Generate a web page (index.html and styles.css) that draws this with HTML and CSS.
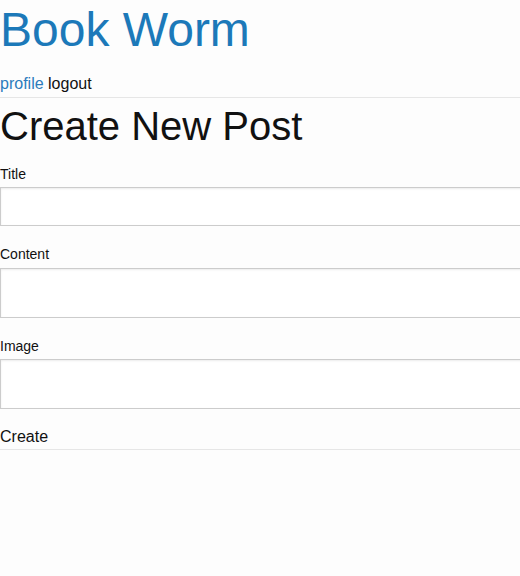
FILE: index.html
```html
<!DOCTYPE html>
<html lang="en">
<head>
<meta charset="utf-8">
<title>Book Worm</title>
<link rel="stylesheet" href="styles.css">
</head>
<body>
<header class="site-header">
  <h1 class="brand">Book Worm</h1>
  <nav class="nav">
    <a class="nav-link" href="#">profile</a>
    <a class="nav-link nav-logout" href="#">logout</a>
  </nav>
</header>
<main class="main">
  <h2 class="page-title">Create New Post</h2>
  <form class="post-form">
    <div class="field">
      <label class="field-label" for="title">Title</label>
      <input class="field-input field-input--short" id="title" type="text">
    </div>
    <div class="field field--content">
      <label class="field-label" for="content">Content</label>
      <textarea class="field-input field-input--tall" id="content"></textarea>
    </div>
    <div class="field field--last">
      <label class="field-label" for="image">Image</label>
      <input class="field-input field-input--tall" id="image" type="text">
    </div>
    <button class="submit" type="button">Create</button>
  </form>
</main>
</body>
</html>
```

FILE: styles.css
```css
html {
  overflow-x: hidden;
}
body {
  margin: 0;
  background: #fdfdfd;
  font-family: "Liberation Sans", Arial, sans-serif;
  color: #111;
  overflow-x: hidden;
}
.brand {
  margin: 3px 0 0;
  font-size: 48px;
  line-height: 54px;
  font-weight: normal;
  color: #1c79b9;
}
.nav {
  margin-top: 18px;
  font-size: 16px;
  line-height: 18px;
  padding-bottom: 4px;
  border-bottom: 1px solid #e6e6e6;
}
.nav-link {
  color: #2c7cbc;
  text-decoration: none;
}
.nav-logout {
  color: #111;
}
.page-title {
  margin: 5px 0 0;
  font-size: 40px;
  line-height: 46px;
  font-weight: normal;
  color: #111;
}
.post-form {
  display: flex;
  flex-direction: column;
  margin-top: 16px;
}
.field {
  display: flex;
  flex-direction: column;
  margin-bottom: 20px;
}
.field--content {
  margin-bottom: 19px;
}
.field--last {
  margin-bottom: 0;
}
.field-label {
  font-size: 14px;
  line-height: 17px;
  padding-top: 1px;
  margin-bottom: 4px;
  color: #111;
}
.field--content .field-label {
  padding-top: 0;
  margin-bottom: 5px;
}
.field-input {
  display: block;
  box-sizing: content-box;
  width: 100%;
  padding: 0 8px;
  margin: 0;
  border: 1px solid #cccccc;
  background: #fff;
  box-shadow: inset 0 1px 2px rgba(0, 0, 0, 0.08);
  font-family: inherit;
  font-size: 14px;
  resize: none;
  outline: none;
}
.field-input--short {
  height: 37px;
}
.field-input--tall {
  height: 48px;
}
.submit {
  margin-top: 18px;
  padding: 1px 0 3px;
  border: 0;
  border-bottom: 1px solid #e6e6e6;
  background: transparent;
  font-family: inherit;
  font-size: 16px;
  line-height: 18px;
  color: #111;
  text-align: left;
  width: 100%;
}
```
